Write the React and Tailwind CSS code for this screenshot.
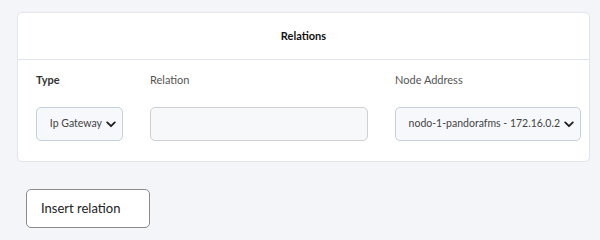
function Chevron(){
    return(
        <svg viewBox="0 0 12 8" className="w-[10px] h-[7px] shrink-0" fill="none" stroke="#222" strokeWidth="2.3" strokeLinecap="round" strokeLinejoin="round">
            <path d="M1.5 1.5 L6 6 L10.5 1.5"/>
        </svg>
    )
}

export default function App(){
    return(
        <div className="w-[600px] h-[240px] bg-[#f4f5f9] font-['Lato',sans-serif] overflow-hidden">
            <div className="pt-[12px] pl-[17px] pr-[10px]">
                <div className="bg-white border border-[#e1e4ea] rounded-[5px] h-[150px]">
                    <div className="h-[47px] flex items-center justify-center border-b border-[#e1e4ea] text-[11px] font-bold text-[#111]">
                        Relations
                    </div>
                    <div className="grid grid-cols-[114px_245px_185px] pl-[18px] pt-[12px]">
                        <div className="text-[11px] font-bold text-[#333] h-[16px] leading-[16px]">Type</div>
                        <div className="text-[11px] text-[#555] h-[16px] leading-[16px]">Relation</div>
                        <div className="text-[11px] text-[#555] h-[16px] leading-[16px]">Node Address</div>

                        <div className="mt-[19px] w-[87px] h-[34px] border border-[#c5d0de] rounded-[5px] bg-[#f6f8fc] flex items-center justify-end pr-[6px] gap-[4px] text-[10.5px] text-[#444] whitespace-nowrap">
                            <span>Ip Gateway</span>
                            <Chevron/>
                        </div>
                        <div className="mt-[19px] w-[218px] h-[34px] border border-[#cdd0d5] rounded-[5px] bg-[#f7f8fa]"></div>
                        <div className="mt-[19px] w-[186px] h-[34px] border border-[#c5d0de] rounded-[5px] bg-[#f6f8fc] flex items-center justify-end pr-[6px] gap-[4px] text-[10.5px] text-[#444] whitespace-nowrap">
                            <span>nodo-1-pandorafms - 172.16.0.2</span>
                            <Chevron/>
                        </div>
                    </div>
                </div>
            </div>
            <div className="pl-[26px] pt-[27px]">
                <button className="w-[124px] h-[39px] bg-white border border-[#8a8a8a] rounded-[5px] text-[13px] text-[#222] text-left pl-[14px]">
                    Insert relation
                </button>
            </div>
        </div>
    )
}
